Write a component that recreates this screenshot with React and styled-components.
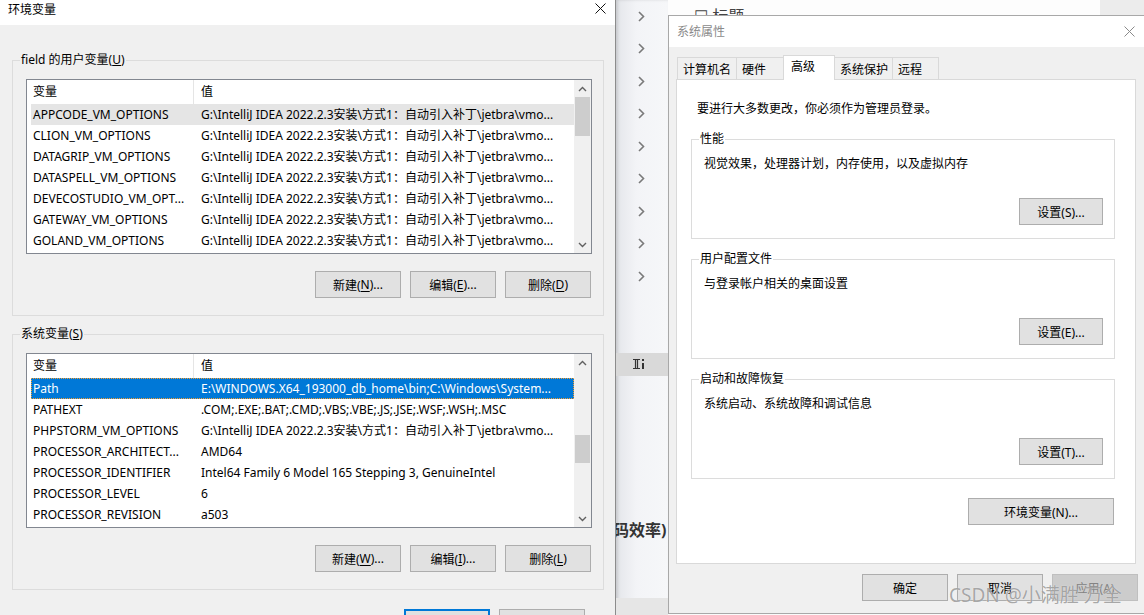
import React from "react";
import styled, { createGlobalStyle } from "styled-components";

const GlobalStyle = createGlobalStyle`
  html, body {
    margin: 0;
    padding: 0;
  }
  body {
    font-family: "Noto Sans", "Noto Sans CJK SC", sans-serif;
    font-size: 12px;
    color: #000;
  }
`;

const JB = "G:\\IntelliJ IDEA 2022.2.3安装\\方式1：自动引入补丁\\jetbra\\vmo...";

const userVars = [
  ["APPCODE_VM_OPTIONS", JB],
  ["CLION_VM_OPTIONS", JB],
  ["DATAGRIP_VM_OPTIONS", JB],
  ["DATASPELL_VM_OPTIONS", JB],
  ["DEVECOSTUDIO_VM_OPT...", JB],
  ["GATEWAY_VM_OPTIONS", JB],
  ["GOLAND_VM_OPTIONS", JB],
];

const sysVars = [
  ["Path", "E:\\WINDOWS.X64_193000_db_home\\bin;C:\\Windows\\System..."],
  ["PATHEXT", ".COM;.EXE;.BAT;.CMD;.VBS;.VBE;.JS;.JSE;.WSF;.WSH;.MSC"],
  ["PHPSTORM_VM_OPTIONS", JB],
  ["PROCESSOR_ARCHITECT...", "AMD64"],
  ["PROCESSOR_IDENTIFIER", "Intel64 Family 6 Model 165 Stepping 3, GenuineIntel"],
  ["PROCESSOR_LEVEL", "6"],
  ["PROCESSOR_REVISION", "a503"],
];

const tabs = [
  { label: "计算机名", w: 60 },
  { label: "硬件", w: 48 },
  { label: "高级", w: 52, active: true },
  { label: "系统保护", w: 59 },
  { label: "远程", w: 47 },
];

const sections = [
  { title: "性能", text: "视觉效果，处理器计划，内存使用，以及虚拟内存", btn: "设置(S)..." },
  { title: "用户配置文件", text: "与登录帐户相关的桌面设置", btn: "设置(E)..." },
  { title: "启动和故障恢复", text: "系统启动、系统故障和调试信息", btn: "设置(T)..." },
];

const CloseIcon = ({ color }) => (
  <svg width="11" height="11" viewBox="0 0 11 11">
    <path d="M0.5 0.5 L10.5 10.5 M10.5 0.5 L0.5 10.5" stroke={color} strokeWidth="1" fill="none" />
  </svg>
);

const Chevron = ({ up }) => (
  <svg width="9" height="6" viewBox="0 0 9 6">
    <polyline
      points={up ? "1,5 4.5,1.5 8,5" : "1,1 4.5,4.5 8,1"}
      stroke="#606060"
      strokeWidth="1.4"
      fill="none"
    />
  </svg>
);

const NavArrow = () => (
  <svg width="7" height="11" viewBox="0 0 7 11">
    <polyline points="1,1 5.5,5.5 1,10" stroke="#7a7a7a" strokeWidth="1.6" fill="none" />
  </svg>
);

const ListIcon = () => (
  <svg width="12" height="12" viewBox="0 0 12 12">
    <path d="M0 1.5 H7 M0 10.5 H7 M2.5 1.5 V10.5 M4.5 1.5 V10.5" stroke="#333" strokeWidth="1.2" fill="none" />
    <rect x="9" y="1" width="2" height="2" fill="#333" />
    <rect x="9" y="5" width="2" height="6" fill="#333" />
  </svg>
);

const VarList = ({ rows, selected, hover, thumbTop, thumbHeight }) => (
  <ListBox>
    <Table>
      <HeadRow>
        <Cell $first $head>变量</Cell>
        <Cell $head>值</Cell>
      </HeadRow>
      {rows.map(([name, value], i) => (
        <Row key={name} $state={i === selected ? "selected" : i === hover ? "hover" : ""}>
          <Cell $first>{name}</Cell>
          <Cell>{value}</Cell>
        </Row>
      ))}
    </Table>
    <ScrollBar>
      <ScrollArrow>
        <Chevron up />
      </ScrollArrow>
      <Track>
        <Thumb $top={thumbTop} $height={thumbHeight} />
      </Track>
      <ScrollArrow>
        <Chevron />
      </ScrollArrow>
    </ScrollBar>
  </ListBox>
);

const App = () => {
  return (
    <>
      <GlobalStyle />
      <Screen>
        <EnvDialog>
          <TitleBar $h={25} $pt={2} $pr={9}>
            <span>环境变量</span>
            <CloseSlot $top={1}>
              <CloseIcon color="#111" />
            </CloseSlot>
          </TitleBar>
          <EnvBody>
            <Group $top={27} $pb={17}>
              <Legend>
                field 的用户变量(<u>U</u>)
              </Legend>
              <GroupInner $pl={6}>
                <VarList rows={userVars} hover={0} thumbTop={0} thumbHeight={39} />
                <ButtonRow $mt={17} $pr={1}>
                  <Button>
                    新建(<u>N</u>)...
                  </Button>
                  <Button>
                    编辑(<u>E</u>)...
                  </Button>
                  <Button>
                    删除(<u>D</u>)
                  </Button>
                </ButtonRow>
              </GroupInner>
            </Group>
            <Group $top={10} $pb={17}>
              <Legend>
                系统变量(<u>S</u>)
              </Legend>
              <GroupInner $pl={6}>
                <VarList rows={sysVars} selected={0} thumbTop={64} thumbHeight={28} />
                <ButtonRow $mt={17} $pr={1}>
                  <Button>
                    新建(<u>W</u>)...
                  </Button>
                  <Button>
                    编辑(<u>I</u>)...
                  </Button>
                  <Button>
                    删除(<u>L</u>)
                  </Button>
                </ButtonRow>
              </GroupInner>
            </Group>
            <ButtonRow $mt={19} $pr={19}>
              <Button $primary>确定</Button>
              <Button>取消</Button>
            </ButtonRow>
          </EnvBody>
        </EnvDialog>

        <Backdrop>
          <Sidebar>
            <NavList>
              {Array.from({ length: 9 }).map((_, i) => (
                <NavItem key={i}>
                  <NavArrow />
                </NavItem>
              ))}
            </NavList>
            <ToolBand>
              <ListIcon />
            </ToolBand>
            <PageText>码效率)</PageText>
            <SidebarFoot />
          </Sidebar>

          <MainColumn>
            <PageHeader>
              <HeaderTitle>☐ 标题</HeaderTitle>
              <HeaderGray />
            </PageHeader>
            <SysDialog>
              <TitleBar $h={31} $pt={8} $pr={9} $muted>
                <span>系统属性</span>
                <CloseSlot $top={2}>
                  <CloseIcon color="#8a8a8a" />
                </CloseSlot>
              </TitleBar>
              <SysBody>
                <TabStrip>
                  {tabs.map((t) => (
                    <Tab key={t.label} $w={t.w} $active={t.active}>
                      {t.label}
                    </Tab>
                  ))}
                </TabStrip>
                <TabPanel>
                  <Intro>要进行大多数更改，你必须作为管理员登录。</Intro>
                  {sections.map((s, i) => (
                    <Group key={s.title} $top={i === 0 ? 14 : 12} $pb={13} $w={424}>
                      <Legend>{s.title}</Legend>
                      <GroupInner $pl={5}>
                        <GroupText>{s.text}</GroupText>
                        <ButtonRow $mt={26} $pr={0}>
                          <Button $w={84}>{s.btn}</Button>
                        </ButtonRow>
                      </GroupInner>
                    </Group>
                  ))}
                  <ButtonRow $mt={19} $pr={1} $w={424}>
                    <Button $w={146}>环境变量(N)...</Button>
                  </ButtonRow>
                </TabPanel>
                <ButtonRow $mt={10} $pr={0}>
                  <Button>确定</Button>
                  <Button>取消</Button>
                  <Button $disabled>应用(A)</Button>
                </ButtonRow>
              </SysBody>
            </SysDialog>
          </MainColumn>
        </Backdrop>

        <Watermark>CSDN @小满胜 万全</Watermark>
      </Screen>
    </>
  );
};

const Screen = styled.div`
  position: relative;
  display: flex;
  width: 1144px;
  height: 615px;
  overflow: hidden;
  background: #f0f0f0;
`;

const EnvDialog = styled.div`
  width: 615px;
  flex-shrink: 0;
  display: flex;
  flex-direction: column;
  background: #f0f0f0;
  border-right: 1px solid #8c8c8c;
`;

const TitleBar = styled.div`
  height: ${(p) => p.$h}px;
  flex-shrink: 0;
  box-sizing: border-box;
  display: flex;
  justify-content: space-between;
  align-items: flex-start;
  padding: ${(p) => p.$pt}px ${(p) => p.$pr}px 0 8px;
  background: #fff;
  line-height: 16px;
  color: ${(p) => (p.$muted ? "#8a8a8a" : "#000")};
`;

const CloseSlot = styled.div`
  margin-top: ${(p) => p.$top}px;
  display: flex;
`;

const EnvBody = styled.div`
  display: flex;
  flex-direction: column;
  padding: 0 11px 0 12px;
`;

const Group = styled.fieldset`
  margin: ${(p) => p.$top}px 0 0;
  padding: 0 11px ${(p) => p.$pb}px 7px;
  border: 1px solid #dcdcdc;
  min-width: 0;
  width: ${(p) => (p.$w ? `${p.$w}px` : "auto")};
  box-sizing: border-box;
`;

const Legend = styled.legend`
  padding: 0 1px;
  line-height: 16px;
  color: #000;
`;

const GroupInner = styled.div`
  padding-left: ${(p) => p.$pl}px;
  padding-top: 11px;
`;

const ListBox = styled.div`
  display: flex;
  height: 175px;
  box-sizing: border-box;
  border: 1px solid #828790;
  background: #fff;
  overflow: hidden;
`;

const Table = styled.div`
  flex: 1;
  min-width: 0;
  padding-left: 4px;
`;

const HeadRow = styled.div`
  display: flex;
  height: 24px;
  line-height: 23px;
`;

const Row = styled.div`
  display: flex;
  height: 21px;
  line-height: 21px;
  box-sizing: border-box;
  background: ${(p) =>
    p.$state === "selected" ? "#0078d7" : p.$state === "hover" ? "#e5e5e5" : "transparent"};
  color: ${(p) => (p.$state === "selected" ? "#fff" : "#000")};
  outline: ${(p) => (p.$state === "selected" ? "1px dotted #f59f32" : "none")};
  outline-offset: -1px;
`;

const Cell = styled.div`
  flex: ${(p) => (p.$first ? "0 0 163px" : "1")};
  min-width: 0;
  box-sizing: border-box;
  padding-left: ${(p) => (p.$first ? 2 : 7)}px;
  white-space: nowrap;
  overflow: hidden;
  text-overflow: ellipsis;
  border-right: ${(p) => (p.$first && p.$head ? "1px solid #e5e5e5" : "none")};
`;

const ScrollBar = styled.div`
  width: 17px;
  flex-shrink: 0;
  display: flex;
  flex-direction: column;
  background: #f0f0f0;
`;

const ScrollArrow = styled.div`
  height: 17px;
  display: flex;
  align-items: center;
  justify-content: center;
`;

const Track = styled.div`
  flex: 1;
  padding: 0 1px;
`;

const Thumb = styled.div`
  margin-top: ${(p) => p.$top}px;
  height: ${(p) => p.$height}px;
  background: #cdcdcd;
`;

const ButtonRow = styled.div`
  display: flex;
  justify-content: flex-end;
  gap: 9px;
  margin-top: ${(p) => p.$mt}px;
  padding-right: ${(p) => p.$pr}px;
  width: ${(p) => (p.$w ? `${p.$w}px` : "auto")};
  box-sizing: border-box;
`;

const Button = styled.div`
  width: ${(p) => p.$w || 86}px;
  height: 27px;
  flex-shrink: 0;
  box-sizing: border-box;
  display: flex;
  align-items: center;
  justify-content: center;
  background: ${(p) => (p.$disabled ? "#cccccc" : "#e1e1e1")};
  border: ${(p) => (p.$primary ? "2px solid #0078d7" : p.$disabled ? "1px solid #bfbfbf" : "1px solid #adadad")};
  color: ${(p) => (p.$disabled ? "#838383" : "#000")};
  white-space: nowrap;
  u {
    text-underline-offset: 2px;
  }
`;

const Backdrop = styled.div`
  flex: 1;
  display: flex;
  min-width: 0;
  background: #fafafa;
`;

const Sidebar = styled.div`
  width: 52px;
  flex-shrink: 0;
  display: flex;
  flex-direction: column;
  background: linear-gradient(to right, #e4e6ea, #f3f4f7 40%, #f6f7f9);
  box-shadow: inset 2px 0 3px rgba(0, 0, 0, 0.12);
  overflow: hidden;
`;

const NavList = styled.div`
  display: flex;
  flex-direction: column;
`;

const NavItem = styled.div`
  height: 32.5px;
  display: flex;
  align-items: center;
  padding-left: 22px;
`;

const ToolBand = styled.div`
  margin-top: 60px;
  height: 23px;
  display: flex;
  align-items: center;
  padding-left: 17px;
  background: #d9d9d9;
`;

const PageText = styled.div`
  margin-top: 143px;
  height: 22px;
  line-height: 22px;
  font-size: 16px;
  font-weight: bold;
  color: #333;
  white-space: nowrap;
  text-indent: -3px;
`;

const SidebarFoot = styled.div`
  margin-top: auto;
  height: 17px;
  background: #e6e6e6;
`;

const MainColumn = styled.div`
  flex: 1;
  min-width: 0;
  display: flex;
  flex-direction: column;
`;

const PageHeader = styled.div`
  height: 15px;
  flex-shrink: 0;
  display: flex;
  overflow: hidden;
  background: #fdfdfd;
`;

const HeaderTitle = styled.div`
  flex: 1;
  margin-top: 7px;
  padding-left: 26px;
  font-size: 16px;
  line-height: 18px;
  color: #444;
`;

const HeaderGray = styled.div`
  width: 44px;
  background: #ececec;
`;

const SysDialog = styled.div`
  height: 599px;
  flex-shrink: 0;
  box-sizing: border-box;
  display: flex;
  flex-direction: column;
  background: #f0f0f0;
  border: 1px solid #a8a8a8;
  border-right: none;
`;

const SysBody = styled.div`
  display: flex;
  flex-direction: column;
  padding: 0 6px 0 7px;
`;

const TabStrip = styled.div`
  display: flex;
  align-items: flex-end;
  height: 24px;
  margin-top: 9px;
  padding-left: 1px;
  margin-bottom: -1px;
`;

const Tab = styled.div`
  position: relative;
  z-index: ${(p) => (p.$active ? 2 : 1)};
  width: ${(p) => p.$w}px;
  height: ${(p) => (p.$active ? 25 : 23)}px;
  box-sizing: border-box;
  margin-right: -1px;
  padding-left: ${(p) => (p.$active ? 7 : 5)}px;
  line-height: ${(p) => (p.$active ? 21 : 23)}px;
  border: 1px solid #d9d9d9;
  border-bottom: ${(p) => (p.$active ? "none" : "1px solid #d9d9d9")};
  background: ${(p) => (p.$active ? "#fff" : "#f0f0f0")};
  white-space: nowrap;
`;

const TabPanel = styled.div`
  width: 460px;
  height: 485px;
  box-sizing: border-box;
  display: flex;
  flex-direction: column;
  padding: 0 0 0 14px;
  background: #fff;
  border: 1px solid #d9d9d9;
`;

const Intro = styled.div`
  margin-top: 21px;
  padding-left: 6px;
  line-height: 16px;
`;

const GroupText = styled.div`
  margin-top: -2px;
  line-height: 16px;
`;

const Watermark = styled.div`
  position: absolute;
  left: 949px;
  top: 582px;
  font-family: "Noto Sans", "Noto Sans CJK SC", sans-serif;
  font-size: 19px;
  line-height: 26px;
  color: rgba(110, 110, 110, 0.6);
  text-shadow: 0 0 1px rgba(255, 255, 255, 0.9);
  white-space: nowrap;
  pointer-events: none;
`;

export default App;
